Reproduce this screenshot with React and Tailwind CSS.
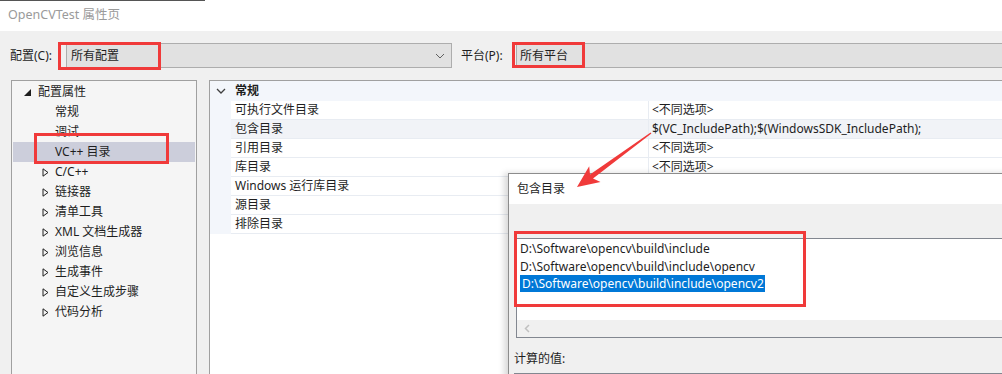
import React from 'react';

const font = { fontFamily: '"Noto Sans", "Noto Sans CJK SC", sans-serif' };

const treeItems = [
  { label: '常规', kind: 'leaf' },
  { label: '调试', kind: 'leaf' },
  { label: 'VC++ 目录', kind: 'leaf', selected: true },
  { label: 'C/C++', kind: 'branch' },
  { label: '链接器', kind: 'branch' },
  { label: '清单工具', kind: 'branch' },
  { label: 'XML 文档生成器', kind: 'branch' },
  { label: '浏览信息', kind: 'branch' },
  { label: '生成事件', kind: 'branch' },
  { label: '自定义生成步骤', kind: 'branch' },
  { label: '代码分析', kind: 'branch' },
];

const props = [
  { name: '可执行文件目录', value: '<不同选项>' },
  { name: '包含目录', value: '$(VC_IncludePath);$(WindowsSDK_IncludePath);', active: true },
  { name: '引用目录', value: '<不同选项>' },
  { name: '库目录', value: '<不同选项>' },
  { name: 'Windows 运行库目录', value: '' },
  { name: '源目录', value: '' },
  { name: '排除目录', value: '' },
];

const paths = [
  'D:\\Software\\opencv\\build\\include',
  'D:\\Software\\opencv\\build\\include\\opencv',
  'D:\\Software\\opencv\\build\\include\\opencv2',
];

const OutlineTriangle = () => (
  <svg width="7" height="9" viewBox="0 0 7 9" className="shrink-0">
    <path d="M1 0.8 L6 4.5 L1 8.2 Z" fill="none" stroke="#1e1e1e" strokeWidth="1" />
  </svg>
);

const App = () => {
  return (
    <div className="relative w-[1002px] h-[374px] overflow-hidden bg-[#f0f0f0] text-[12px] text-[#1e1e1e]" style={font}>
      {/* title bar */}
      <div className="relative h-[31px] bg-white flex items-center pl-[8px]">
        <div className="absolute top-0 left-0 w-[205px] h-px bg-[#555]" />
        <span className="text-[12.5px] text-[#9a9a9a]">OpenCVTest 属性页</span>
      </div>

      {/* configuration row */}
      <div className="h-[49px] flex items-center pl-[10px]">
        <span className="w-[56px]">配置(C):</span>
        <div className="relative">
          <div className="w-[386px] h-[25px] bg-[#e1e1e1] border border-[#adadad] flex items-center justify-between pl-[4px] pr-[6px]">
            <span>所有配置</span>
            <svg width="10" height="6" viewBox="0 0 10 6">
              <path d="M1 1 L5 5 L9 1" fill="none" stroke="#606060" strokeWidth="1" />
            </svg>
          </div>
          <div className="absolute left-[-8px] top-[-1px] w-[103px] h-[28px] border-[3px] border-[#f03a3a]" />
        </div>
        <span className="ml-[9px] w-[55px]">平台(P):</span>
        <div className="relative flex-1">
          <div className="h-[25px] bg-[#e1e1e1] border-y border-l border-[#adadad] flex items-center pl-[3px]">
            <span>所有平台</span>
          </div>
          <div className="absolute left-[-4px] top-[-1px] w-[73px] h-[26px] border-[3px] border-[#f03a3a]" />
        </div>
      </div>

      {/* main area */}
      <div className="flex h-[294px]">
        <div className="relative ml-[11px] w-[186px] bg-[#f5f5f5] border-l border-t border-r border-[#a0a0a0] pt-px">
          <div className="h-[20px] flex items-center">
            <svg width="7" height="7" viewBox="0 0 7 7" className="ml-[12px] mr-[7px]">
              <path d="M7 0 L7 7 L0 7 Z" fill="#1e1e1e" />
            </svg>
            <span>配置属性</span>
          </div>
          {treeItems.map((it) => (
            <div
              key={it.label}
              className={`h-[20px] flex items-center mx-[1px] ${it.selected ? 'bg-[#cccedb]' : ''}`}
            >
              <span className="w-[42px] flex justify-end pr-[6px]">
                {it.kind === 'branch' && <OutlineTriangle />}
              </span>
              <span>{it.label}</span>
            </div>
          ))}
          <div className="absolute left-[22px] top-[52px] w-[135px] h-[31px] border-[3px] border-[#f03a3a]" />
        </div>

        <div className="ml-[12px] flex-1 border-l border-t border-[#a0a0a0] bg-white">
          <div className="h-[20px] bg-[#f3f6fb] flex items-center">
            <svg width="10" height="6" viewBox="0 0 10 6" className="ml-[6px] mr-[9px]">
              <path d="M1 1 L5 5 L9 1" fill="none" stroke="#404040" strokeWidth="1.3" />
            </svg>
            <span className="font-bold">常规</span>
          </div>
          {props.map((p) => (
            <div key={p.name} className="h-[19px] flex bg-[#f3f6fb]">
              <div className="w-[21px]" />
              <div className={`flex-1 flex border-b border-[#e8ecf2] ${p.active ? 'bg-[#f1f3f7]' : 'bg-white'}`}>
                <div className="w-[418px] flex items-center pl-[4px] border-r border-[#e8ecf2]">{p.name}</div>
                <div className="flex-1 flex items-center pl-[3px] whitespace-nowrap">{p.value}</div>
              </div>
            </div>
          ))}
        </div>
      </div>

      {/* include directories dialog */}
      <div className="absolute left-[508px] top-[173px] w-[520px] h-[230px] border-l border-t border-[#8c8c8c] bg-[#f0f0f0] shadow-[-4px_0_6px_rgba(0,0,0,0.15)]">
        <div className="h-[30px] bg-white flex items-center pl-[8px]">包含目录</div>
        <div className="relative pt-[34px] pl-[7px]">
          <div className="h-[100px] bg-white border-l border-t border-b border-[#828790] flex flex-col">
            <div className="flex-1 pt-[1px] pl-[3px] leading-[17.5px]">
              {paths.map((p, i) => (
                <div key={p}>
                  <span className={i === 2 ? 'bg-[#0078d7] text-white pl-[2px] pr-[1px]' : ''}>{p}</span>
                </div>
              ))}
            </div>
            <div className="h-[17px] bg-[#f0f0f0] flex items-center pl-[7px]">
              <svg width="6" height="9" viewBox="0 0 6 9">
                <path d="M5 1 L1.5 4.5 L5 8" fill="none" stroke="#c0c0c0" strokeWidth="1.5" />
              </svg>
            </div>
          </div>
          <div className="absolute left-[5px] top-[27px] w-[292px] h-[76px] border-[3px] border-[#f03a3a]" />
          <div className="pt-[12px] -ml-[2px]">计算的值:</div>
          <div className="mt-[5px] -ml-[2px] h-[20px] bg-white border-l border-t border-[#828790]" />
        </div>
      </div>

      {/* red annotation arrow */}
      <svg className="absolute left-0 top-0 pointer-events-none" width="1002" height="374">
        <polygon
          points="651.4,133.6 593,178.4 600.5,182 577,187 589.2,166.2 590,174.4 650.6,132.4"
          fill="#f03a3a"
        />
      </svg>
    </div>
  );
};

export default App;
